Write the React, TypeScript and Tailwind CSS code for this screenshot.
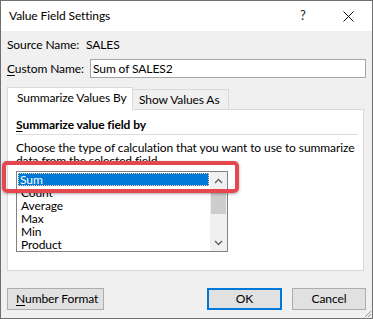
import React from "react";

const font = { fontFamily: 'Lato, "Noto Sans", Arial, sans-serif' };

function Chevron({ up }: { up?: boolean }) {
  return (
    <svg width="9" height="6" viewBox="0 0 9 6">
      <path
        d={up ? "M1 5 L4.5 1.5 L8 5" : "M1 1 L4.5 4.5 L8 1"}
        fill="none"
        stroke="#606060"
        strokeWidth="1.4"
      />
    </svg>
  );
}

export default function App() {
  const items = ["Count", "Average", "Max", "Min", "Product"];
  return (
    <div
      className="relative w-[373px] h-[319px] border border-[#6f6f6f] bg-[#f0f0f0] text-[12px] tracking-[-0.1px] text-black flex flex-col overflow-hidden whitespace-nowrap"
      style={font}
    >
      {/* Title bar */}
      <div className="h-[30px] bg-white flex items-center pl-[8px] shrink-0">
        <span className="flex-1">Value Field Settings</span>
        <span className="w-[14px] text-[13px] mr-[29px] text-[#222]">?</span>
        <svg width="11" height="11" viewBox="0 0 11 11" className="mr-[18px]">
          <path d="M0.5 0.5 L10.5 10.5 M10.5 0.5 L0.5 10.5" stroke="#111" strokeWidth="1" />
        </svg>
      </div>

      <div className="pl-[6px] pr-[6px] flex flex-col">
        {/* Source name */}
        <div className="mt-[6px] h-[16px] flex items-center">
          <span className="w-[79px]">Source Name:</span>
          <span>SALES</span>
        </div>
        {/* Custom name */}
        <div className="mt-[6px] h-[19px] flex items-center">
          <span className="w-[83px]">
            <span className="underline underline-offset-2">C</span>ustom Name:
          </span>
          <div className="w-[276px] h-[19px] bg-white border border-[#a5a5a5] flex items-center pl-[2px]">
            Sum of SALES2
          </div>
        </div>

        {/* Tabs */}
        <div className="mt-[9px] h-[22px] flex items-end">
          <div className="relative z-10 h-[23px] -mb-px w-[126px] bg-white border border-b-0 border-[#d9d9d9] flex items-center pl-[9px] pb-[3px]">
            Summarize Values By
          </div>
          <div className="h-[20px] w-[96px] border border-l-0 border-b-0 border-[#d9d9d9] flex items-center pl-[6px]">
            Show Values As
          </div>
        </div>

        {/* Panel */}
        <div className="w-[357px] h-[162px] bg-white border border-[#d9d9d9] pl-[8px] pr-[5px] flex flex-col">
          <div className="mt-[7px] h-[16px] flex items-center font-bold">
            <span className="underline underline-offset-2">S</span>ummarize value field by
          </div>
          <div className="mt-px h-px bg-[#dcdcdc]" />
          <div className="mt-[6px] leading-[13px] w-[342px] flex flex-col">
            <span>Choose the type of calculation that you want to use to summarize</span>
            <span>data from the selected field</span>
          </div>
          <div className="mt-[4px] w-[212px] h-[81px] border border-[#828282] flex">
            <div className="flex-1 pt-px pl-px flex flex-col leading-[13px]">
              <div className="h-[13px] w-[191px] bg-[#0078d7] text-white pl-[2px] outline outline-1 outline-dotted outline-[#f5d79a] -outline-offset-1">
                Sum
              </div>
              {items.map((t) => (
                <div key={t} className="h-[13px] pl-[3px]">
                  {t}
                </div>
              ))}
            </div>
            <div className="w-[17px] bg-[#f0f0f0] flex flex-col items-center">
              <div className="h-[17px] flex items-center justify-center">
                <Chevron up />
              </div>
              <div className="mt-[4px] w-[15px] h-[21px] bg-[#cdcdcd]" />
              <div className="flex-1" />
              <div className="h-[17px] flex items-center justify-center">
                <Chevron />
              </div>
            </div>
          </div>
        </div>

        {/* Buttons */}
        <div className="mt-[17px] flex">
          <div className="w-[97px] h-[22px] bg-[#e1e1e1] border border-[#adadad] flex items-center pl-[8px]">
            <span className="underline underline-offset-2">N</span>umber Format
          </div>
          <div className="ml-[103px] w-[75px] h-[22px] bg-[#e1e1e1] border-2 border-[#0078d7] flex items-center justify-center">
            OK
          </div>
          <div className="ml-[10px] w-[74px] h-[22px] bg-[#e1e1e1] border border-[#adadad] flex items-center justify-center">
            Cancel
          </div>
        </div>
      </div>

      {/* Resize grip */}
      <svg width="8" height="8" viewBox="0 0 8 8" className="absolute right-0 bottom-0">
        <path d="M7 1 L1 7 M7 4 L4 7" stroke="#9a9a9a" strokeWidth="1" />
      </svg>

      {/* Red highlight */}
      <div className="absolute left-[1px] top-[160px] w-[237px] h-[32px] border-[4px] border-[#e5474f] rounded-[5px] shadow-[0_1px_3px_rgba(0,0,0,0.35)]" />
    </div>
  );
}
